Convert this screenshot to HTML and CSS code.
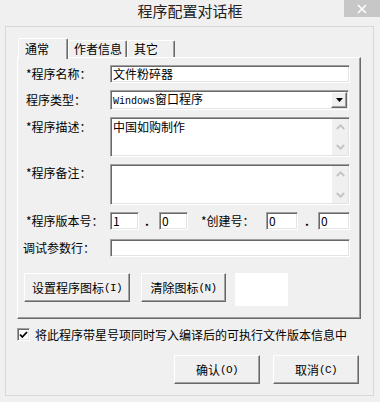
FILE: index.html
```html
<!DOCTYPE html>
<html lang="zh-CN">
<head>
<meta charset="utf-8">
<title>程序配置对话框</title>
<link rel="stylesheet" href="styles.css">
</head>
<body>
<div class="window">
  <div class="titlebar">
    <div class="title">程序配置对话框</div>
    <div class="close">
      <svg width="10" height="10" viewBox="0 0 10 10"><path d="M1 1L9 9M9 1L1 9" stroke="#fff" stroke-width="1.6"/></svg>
    </div>
  </div>
  <div class="frame">
    <div class="tabs">
      <div class="tab active t1">通常</div>
      <div class="tab t2">作者信息</div>
      <div class="tab t3">其它</div>
    </div>
    <div class="panel">
      <div class="row">
        <span class="lbl">*程序名称：</span>
        <div class="field w240">文件粉碎器</div>
      </div>
      <div class="row">
        <span class="lbl">程序类型：</span>
        <div class="field combo">
          <span class="combo-text"><span class="mono">Windows</span>窗口程序</span>
          <span class="drop"><svg width="7" height="4" viewBox="0 0 7 4"><path d="M0 0H7L3.5 4Z" fill="#000"/></svg></span>
        </div>
      </div>
      <div class="row top">
        <span class="lbl lbl-top">*程序描述：</span>
        <div class="field memo h40">
          <div class="memo-text">中国如购制作</div>
          <div class="scroll">
            <span class="arrow"><svg width="9" height="6" viewBox="0 0 9 6"><path d="M0.8 5L4.5 1.3L8.2 5" fill="none" stroke="#c3c3c3" stroke-width="1.8"/></svg></span>
            <span class="arrow"><svg width="9" height="6" viewBox="0 0 9 6"><path d="M0.8 1L4.5 4.7L8.2 1" fill="none" stroke="#c3c3c3" stroke-width="1.8"/></svg></span>
          </div>
        </div>
      </div>
      <div class="row top">
        <span class="lbl lbl-top2">*程序备注：</span>
        <div class="field memo h41">
          <div class="memo-text"></div>
          <div class="scroll">
            <span class="arrow"><svg width="9" height="6" viewBox="0 0 9 6"><path d="M0.8 5L4.5 1.3L8.2 5" fill="none" stroke="#c3c3c3" stroke-width="1.8"/></svg></span>
            <span class="arrow"><svg width="9" height="6" viewBox="0 0 9 6"><path d="M0.8 1L4.5 4.7L8.2 1" fill="none" stroke="#c3c3c3" stroke-width="1.8"/></svg></span>
          </div>
        </div>
      </div>
      <div class="row">
        <span class="lbl">*程序版本号：</span>
        <div class="field w29">1</div>
        <span class="dot d1">.</span>
        <div class="field w29">0</div>
        <span class="lbl2">*创建号：</span>
        <div class="field w32">0</div>
        <span class="dot d2">.</span>
        <div class="field w32">0</div>
      </div>
      <div class="row r6">
        <span class="lbl lbl-dbg">调试参数行：</span>
        <div class="field w240"></div>
      </div>
      <div class="row r7">
        <div class="btn b1">设置程序图标<span class="mono2">(I)</span></div>
        <div class="btn b2">清除图标<span class="mono2">(N)</span></div>
        <div class="iconbox"></div>
      </div>
    </div>
    <div class="check">
      <span class="box"><svg width="9" height="8" viewBox="0 0 9 8"><path d="M1 3.5L3.3 6L8 1" fill="none" stroke="#000" stroke-width="1.8"/></svg></span>
      <span class="check-text">将此程序带星号项同时写入编译后的可执行文件版本信息中</span>
    </div>
    <div class="actions">
      <div class="btn act">确认<span class="mono2">(O)</span></div>
      <div class="btn act">取消<span class="mono2">(C)</span></div>
    </div>
  </div>
</div>
</body>
</html>
```
FILE: styles.css
```css
* { box-sizing: border-box; margin: 0; padding: 0; }
html, body { width: 380px; height: 402px; overflow: hidden; }
body {
  background: #f0f0f0;
  font: 12px/14px "Noto Sans CJK SC", "Microsoft YaHei", sans-serif;
  color: #000;
}
.window { width: 380px; height: 402px; }

.titlebar {
  height: 26px;
  display: grid;
  grid-template-columns: 1fr auto 1fr;
  align-items: start;
}
.title {
  grid-column: 2;
  font-size: 15px;
  line-height: 22px;
  color: #222;
}
.close {
  grid-column: 3;
  justify-self: end;
  width: 36px;
  height: 17px;
  background: #c7c7c7;
  display: flex;
  align-items: center;
  justify-content: center;
}

.frame {
  margin-left: 5px;
  width: 369px;
  height: 370px;
  border: 1px solid #d9d9d9;
  padding: 11px 11px 0 11px;
  display: flex;
  flex-direction: column;
}

.tabs {
  display: flex;
  align-items: flex-start;
  height: 19px;
  margin-left: 1px;
  position: relative;
  z-index: 1;
}
.tab {
  height: 17px;
  margin-top: 2px;
  border: 1px solid;
  border-color: #fff #696969 transparent #fff;
  border-bottom: 0;
  box-shadow: inset -1px 0 0 #a0a0a0;
  border-radius: 2px 2px 0 0;
  padding-left: 5px;
  line-height: 15px;
  background: #f0f0f0;
  white-space: nowrap;
}
.tab.active {
  height: 21px;
  margin-top: 0;
  line-height: 19px;
  padding-left: 6px;
}
.t1 { width: 50px; }
.t2 { width: 59px; }
.t3 { width: 48px; padding-left: 6px; }

.panel {
  width: 344px;
  height: 262px;
  border: 1px solid;
  border-color: #fff #696969 #696969 #fff;
  box-shadow: inset -1px -1px 0 #a0a0a0;
  padding-top: 7px;
  display: flex;
  flex-direction: column;
}

.row { display: flex; align-items: center; margin-top: 7px; }
.row:first-child { margin-top: 0; }
.row.top { align-items: flex-start; }
.row.r6 { margin-top: 9px; }
.row.r7 { margin-top: 16px; align-items: flex-start; padding-left: 6px; }

.lbl { width: 92px; padding-left: 8px; white-space: nowrap; }
.lbl-top { padding-top: 3px; }
.lbl-top2 { padding-top: 2px; }
.lbl-dbg { padding-left: 5px; }
.lbl2 { width: 78px; padding-left: 13px; white-space: nowrap; }

.field {
  height: 18px;
  background: #fff;
  border: 1px solid;
  border-color: #a0a0a0 #fff #fff #a0a0a0;
  box-shadow: inset 1px 1px 0 #696969, inset -1px -1px 0 #e3e3e3;
  padding: 0 2px;
  line-height: 16px;
  white-space: nowrap;
  overflow: hidden;
}
.w240 { width: 240px; }
.w29 { width: 29px; }
.w32 { width: 32px; }

.combo {
  width: 239px;
  height: 20px;
  display: flex;
  align-items: center;
  justify-content: space-between;
  padding: 0 1px 0 2px;
}
.combo-text { line-height: 16px; }
.mono { font-family: "Liberation Mono", monospace; font-size: 10px; }
.mono2 { font-family: "Liberation Mono", monospace; font-size: 11px; letter-spacing: -0.6px; }
.drop {
  width: 16px;
  height: 16px;
  background: #f0f0f0;
  border: 1px solid;
  border-color: #fff #696969 #696969 #fff;
  box-shadow: inset -1px -1px 0 #a0a0a0;
  display: flex;
  align-items: center;
  justify-content: center;
}

.memo {
  width: 240px;
  display: flex;
  padding: 1px;
  line-height: 14px;
}
.h40 { height: 40px; }
.h41 { height: 41px; }
.memo-text { flex: 1; padding: 1px 0 0 1px; }
.scroll {
  width: 16px;
  background: #f0f0f0;
  display: flex;
  flex-direction: column;
  justify-content: space-between;
}
.arrow {
  height: 16px;
  display: flex;
  align-items: center;
  justify-content: center;
}

.dot { width: 20px; font-weight: bold; line-height: 14px; }
.d1 { padding-left: 6px; }
.d2 { padding-left: 7px; }

.btn {
  height: 29px;
  border: 1px solid;
  border-color: #fff #696969 #696969 #fff;
  box-shadow: inset -1px -1px 0 #a0a0a0;
  background: #f0f0f0;
  display: flex;
  align-items: center;
  justify-content: center;
  white-space: nowrap;
}
.b1 { width: 106px; margin-right: 11px; }
.b2 { width: 85px; margin-right: 9px; }
.iconbox { width: 53px; height: 33px; background: #fff; }

.check {
  margin-top: 9px;
  height: 13px;
  display: flex;
  align-items: center;
}
.box {
  width: 13px;
  height: 13px;
  background: #fff;
  border: 1px solid;
  border-color: #a0a0a0 #fff #fff #a0a0a0;
  box-shadow: inset 1px 1px 0 #696969, inset -1px -1px 0 #e3e3e3;
  display: flex;
  align-items: center;
  justify-content: center;
}
.check-text { margin-left: 5px; white-space: nowrap; line-height: 14px; }

.actions {
  margin-top: 14px;
  display: flex;
  justify-content: flex-end;
  gap: 13px;
  margin-right: 3px;
}
.act { width: 86px; }
```
